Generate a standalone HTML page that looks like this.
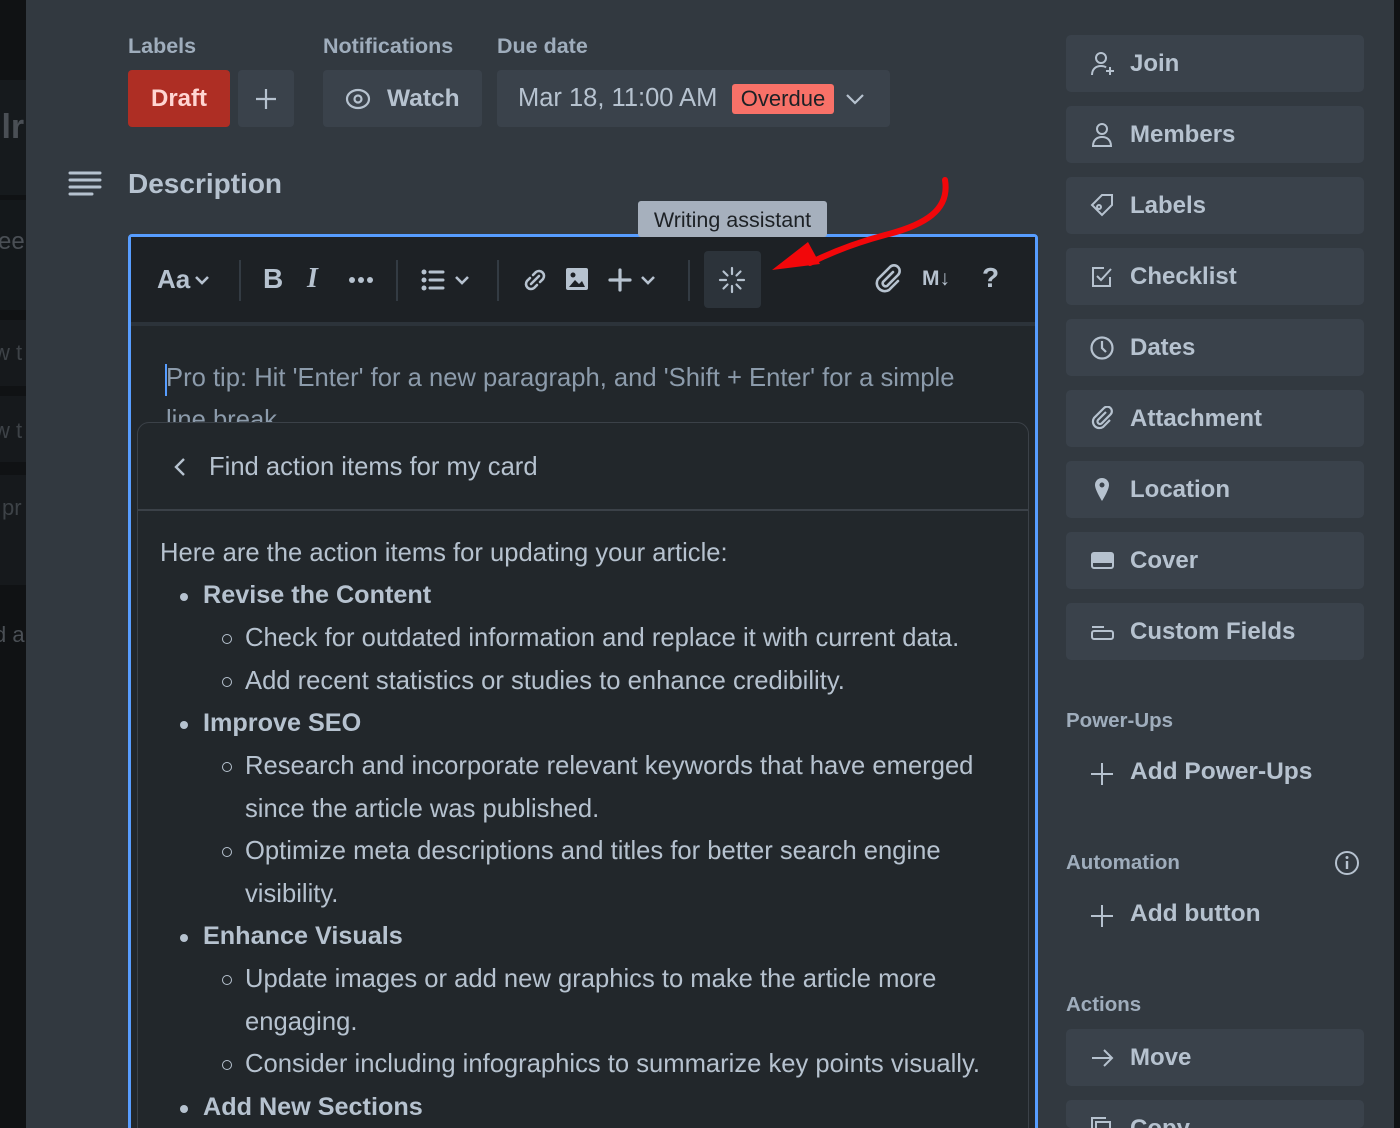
<!DOCTYPE html>
<html style="width:1400px;height:1128px;overflow:hidden"><head><meta charset="utf-8"><style>
*{box-sizing:border-box;margin:0;padding:0}
body{width:1400px;height:1128px;overflow:hidden;background:#323940;font-family:"Liberation Sans",sans-serif;color:#b6c2cf;position:relative}
.abs{position:absolute}
.lbl{font-size:21.5px;font-weight:bold;color:#9fadbc}
.btn{position:absolute;background:#3a424b;border-radius:4px}
.sb{position:absolute;left:1066px;width:298px;height:57px;background:#3a424b;border-radius:5px;font-size:24px;font-weight:bold;color:#b6c2cf;line-height:57px;padding-left:64px}
.sb svg{position:absolute;left:24px;top:16px}
.sh{position:absolute;left:1066px;font-size:20.5px;font-weight:bold;color:#9fadbc}
.ln{position:absolute;font-size:25.6px;color:#b6c2cf;white-space:nowrap}
.b{font-weight:bold;font-size:25.2px}
.dot{position:absolute;width:8px;height:8px;border-radius:50%;background:#b6c2cf}
.cir{position:absolute;width:10px;height:10px;border-radius:50%;border:1.6px solid #b6c2cf}
</style></head><body>
<div class="abs" style="left:0;top:0;width:26px;height:1128px;background:#101214"></div>
<div class="abs" style="left:0;top:80px;width:26px;height:115px;background:#161a1d"></div>
<div class="abs" style="left:0;top:200px;width:26px;height:110px;background:#14181b"></div>
<div class="abs" style="left:0;top:320px;width:26px;height:66px;background:#16191c"></div>
<div class="abs" style="left:0;top:396px;width:26px;height:66px;background:#16191c"></div>
<div class="abs" style="left:0;top:475px;width:26px;height:110px;background:#16191c"></div>
<div class="abs" style="left:0;top:0;width:26px;height:1128px;overflow:hidden">
<div class="abs" style="left:-8px;top:108px;font-size:34px;font-weight:bold;color:#4a4f55">Ilr</div>
<div class="abs" style="left:-10px;top:228px;font-size:24px;color:#4a4f55">ree</div>
<div class="abs" style="left:-6px;top:340px;font-size:22px;color:#3d4247">w t</div>
<div class="abs" style="left:-6px;top:418px;font-size:22px;color:#3d4247">w t</div>
<div class="abs" style="left:2px;top:495px;font-size:22px;color:#3d4247">pr</div>
<div class="abs" style="left:-6px;top:622px;font-size:22px;color:#4a4f55">d a</div>
</div>
<div class="abs" style="left:1394px;top:0;width:6px;height:1128px;background:#101214"></div>

<div class="abs lbl" style="left:128px;top:34px">Labels</div>
<div class="abs lbl" style="left:323px;top:34px">Notifications</div>
<div class="abs lbl" style="left:497px;top:34px">Due date</div>

<div class="btn" style="left:128px;top:70px;width:102px;height:57px;background:#ae2e24;color:#ffd5d2;font-size:24px;font-weight:bold;line-height:57px;text-align:center">Draft</div>
<div class="btn" style="left:238px;top:70px;width:56px;height:57px"><svg width="56" height="57"><path d="M28 19v20M18 29h20" stroke="#b6c2cf" stroke-width="2.2"/></svg></div>
<div class="btn" style="left:323px;top:70px;width:159px;height:57px;font-size:24.5px;font-weight:bold;line-height:57px;padding-left:64px">Watch<svg class="abs" style="left:22px;top:17px" width="26" height="24"><ellipse cx="13" cy="12" rx="11" ry="9" fill="none" stroke="#b6c2cf" stroke-width="2.2"/><circle cx="13" cy="12" r="3.5" fill="none" stroke="#b6c2cf" stroke-width="2.2"/></svg></div>
<div class="btn" style="left:497px;top:70px;width:393px;height:57px;font-size:25.5px;line-height:57px;padding-left:21px">Mar 18, 11:00 AM
<span class="abs" style="left:235px;top:14px;width:102px;height:30px;background:#f87168;border-radius:3px;color:#1d2125;font-size:22px;line-height:30px;text-align:center">Overdue</span>
<svg class="abs" style="left:348px;top:22px" width="20" height="14"><path d="M2 3l8 8 8-8" fill="none" stroke="#b6c2cf" stroke-width="2.2"/></svg></div>

<svg class="abs" style="left:68px;top:170px" width="34" height="28"><g stroke="#b6c2cf" stroke-width="3" stroke-linecap="round"><path d="M2 3h30M2 10h30M2 17h30M2 24h22"/></g></svg>
<div class="abs" style="left:128px;top:168px;font-size:28px;font-weight:bold;color:#b6c2cf">Description</div>

<div class="abs" style="left:128px;top:234px;width:910px;height:900px;border:3px solid #579dff;border-radius:4px;background:#22272b"></div>
<div class="abs" style="left:131px;top:237px;width:904px;height:85px;background:#1d2125"></div>
<div class="abs" style="left:131px;top:322px;width:904px;height:4px;background:#2c333a"></div>
<div class="abs" style="left:638px;top:201px;width:189px;height:36px;background:#a6b0bd;border-radius:3px;color:#1d2125;font-size:21.5px;line-height:38px;text-align:center">Writing assistant</div>
<div class="abs" style="left:157px;top:264px;font-size:26px;font-weight:bold">Aa</div>
<svg class="abs" style="left:193px;top:274px" width="18" height="12"><path d="M3 3l6 6 6-6" fill="none" stroke="#b6c2cf" stroke-width="2.6"/></svg>
<div class="abs" style="left:239px;top:260px;width:2px;height:41px;background:#333b43"></div>
<div class="abs" style="left:263px;top:263px;font-size:28px;font-weight:bold">B</div>
<div class="abs" style="left:307px;top:263px;font-size:28px;font-weight:bold;font-family:'Liberation Serif',serif;font-style:italic">I</div>
<svg class="abs" style="left:348px;top:275px" width="26" height="10"><g fill="#b6c2cf"><circle cx="4" cy="5" r="3"/><circle cx="13" cy="5" r="3"/><circle cx="22" cy="5" r="3"/></g></svg>
<div class="abs" style="left:396px;top:260px;width:2px;height:41px;background:#333b43"></div>
<svg class="abs" style="left:421px;top:268px" width="26" height="24"><g fill="#b6c2cf"><circle cx="3" cy="4" r="2.5"/><circle cx="3" cy="12" r="2.5"/><circle cx="3" cy="20" r="2.5"/></g><g stroke="#b6c2cf" stroke-width="3" stroke-linecap="round"><path d="M9 4h13M9 12h13M9 20h13"/></g></svg>
<svg class="abs" style="left:453px;top:274px" width="18" height="12"><path d="M3 3l6 6 6-6" fill="none" stroke="#b6c2cf" stroke-width="2.6"/></svg>
<div class="abs" style="left:497px;top:260px;width:2px;height:41px;background:#333b43"></div>
<svg class="abs" style="left:521px;top:266px" width="28" height="28"><g fill="none" stroke="#b6c2cf" stroke-width="2.6" stroke-linecap="round"><path d="M12 9l3-3a5 5 0 0 1 7 7l-3 3M16 19l-3 3a5 5 0 0 1-7-7l3-3M10 18l8-8"/></g></svg>
<svg class="abs" style="left:565px;top:267px" width="24" height="24"><rect x="1" y="1" width="22" height="22" rx="2" fill="#b6c2cf"/><circle cx="8" cy="8" r="2.5" fill="#1d2125"/><path d="M4 20l6-7 4 4 3-3 3 6z" fill="#1d2125"/></svg>
<svg class="abs" style="left:608px;top:268px" width="24" height="24"><path d="M12 2v20M2 12h20" stroke="#b6c2cf" stroke-width="3.2" stroke-linecap="round"/></svg>
<svg class="abs" style="left:639px;top:274px" width="18" height="12"><path d="M3 3l6 6 6-6" fill="none" stroke="#b6c2cf" stroke-width="2.6"/></svg>
<div class="abs" style="left:688px;top:260px;width:2px;height:41px;background:#333b43"></div>
<div class="abs" style="left:704px;top:251px;width:57px;height:57px;background:#2c333a;border-radius:4px"></div>
<svg class="abs" style="left:718px;top:266px" width="28" height="28"><g stroke="#b6c2cf" stroke-width="2.2" stroke-linecap="round"><path d="M14 2v6M14 20v6M2 14h6M20 14h6M5.5 5.5l4 4M18.5 18.5l4 4M22.5 5.5l-4 4M5.5 22.5l4-4"/></g></svg>
<svg class="abs" style="left:873px;top:264px" width="30" height="32"><path d="M20 8l-10 10a3 3 0 0 0 4 4l11-11a5.5 5.5 0 0 0-8-8L5 15a8 8 0 0 0 11 11l9-9" fill="none" stroke="#b6c2cf" stroke-width="2.6" stroke-linecap="round"/></svg>
<div class="abs" style="left:922px;top:267px;font-size:21px;font-weight:bold">M↓</div>
<div class="abs" style="left:982px;top:262px;font-size:28px;font-weight:bold">?</div>

<svg class="abs" style="left:760px;top:170px" width="200" height="110"><path d="M185 10c5 30-20 45-60 55-30 8-55 18-75 28" fill="none" stroke="#f2070a" stroke-width="6" stroke-linecap="round"/><path d="M12 100l36-28 12 22z" fill="#f2070a"/></svg>

<div class="abs" style="left:165px;top:364px;width:2px;height:32px;background:#579dff"></div>
<div class="ln" style="left:166px;top:364px;color:#8c9bab">Pro tip: Hit 'Enter' for a new paragraph, and 'Shift + Enter' for a simple</div>
<div class="ln" style="left:166px;top:406px;color:#8c9bab;height:16px;overflow:hidden">line break</div>

<div class="abs" style="left:137px;top:422px;width:892px;height:720px;background:#22272b;border:1.5px solid #3b4148;border-radius:12px"></div>
<div class="abs" style="left:138px;top:509px;width:890px;height:2px;background:#3b4148"></div>
<svg class="abs" style="left:172px;top:457px" width="16" height="20"><path d="M12 2L4 10l8 8" fill="none" stroke="#b6c2cf" stroke-width="2.4"/></svg>
<div class="ln" style="left:209px;top:453px">Find action items for my card</div>

<div class="ln" style="left:160px;top:539px">Here are the action items for updating your article:</div>
<div class="dot" style="left:180px;top:593px"></div><div class="ln b" style="left:203px;top:581px">Revise the Content</div>
<div class="cir" style="left:222px;top:634px"></div><div class="ln" style="left:245px;top:624px">Check for outdated information and replace it with current data.</div>
<div class="cir" style="left:222px;top:677px"></div><div class="ln" style="left:245px;top:667px">Add recent statistics or studies to enhance credibility.</div>
<div class="dot" style="left:180px;top:721px"></div><div class="ln b" style="left:203px;top:709px">Improve SEO</div>
<div class="cir" style="left:222px;top:762px"></div><div class="ln" style="left:245px;top:752px">Research and incorporate relevant keywords that have emerged</div>
<div class="ln" style="left:245px;top:795px">since the article was published.</div>
<div class="cir" style="left:222px;top:847px"></div><div class="ln" style="left:245px;top:837px">Optimize meta descriptions and titles for better search engine</div>
<div class="ln" style="left:245px;top:880px">visibility.</div>
<div class="dot" style="left:180px;top:934px"></div><div class="ln b" style="left:203px;top:922px">Enhance Visuals</div>
<div class="cir" style="left:222px;top:975px"></div><div class="ln" style="left:245px;top:965px">Update images or add new graphics to make the article more</div>
<div class="ln" style="left:245px;top:1008px">engaging.</div>
<div class="cir" style="left:222px;top:1060px"></div><div class="ln" style="left:245px;top:1050px">Consider including infographics to summarize key points visually.</div>
<div class="dot" style="left:180px;top:1105px"></div><div class="ln b" style="left:203px;top:1093px">Add New Sections</div>

<div class="sb" style="top:35px"><svg width="26" height="26"><g fill="none" stroke="#b6c2cf" stroke-width="2"><circle cx="11" cy="7" r="5"/><path d="M2 24c0-6 4-9 9-9 2 0 4 .5 5 1.5"/><path d="M20 16v8M16 20h8"/></g></svg>Join</div>
<div class="sb" style="top:106px"><svg width="26" height="26"><g fill="none" stroke="#b6c2cf" stroke-width="2"><circle cx="12" cy="7" r="5"/><path d="M3 24c0-6 4-9 9-9s9 3 9 9z"/></g></svg>Members</div>
<div class="sb" style="top:177px"><svg width="26" height="26"><g fill="none" stroke="#b6c2cf" stroke-width="2"><path d="M12 2h10v10L12 22 2 12z"/><circle cx="9" cy="14" r="2"/></g></svg>Labels</div>
<div class="sb" style="top:248px"><svg width="26" height="26"><g fill="none" stroke="#b6c2cf" stroke-width="2"><path d="M20 13v9H3V4h11"/><path d="M7 12l4 4 10-11"/></g></svg>Checklist</div>
<div class="sb" style="top:319px"><svg width="26" height="26"><g fill="none" stroke="#b6c2cf" stroke-width="2.2"><circle cx="12" cy="13" r="10.5"/><path d="M12 6v7l4 4"/></g></svg>Dates</div>
<div class="sb" style="top:390px"><svg width="26" height="26"><path d="M16 6l-8 8a2.5 2.5 0 0 0 3.5 3.5l9-9a4.5 4.5 0 0 0-6.5-6.5L4 12a6.5 6.5 0 0 0 9 9l7-7" fill="none" stroke="#b6c2cf" stroke-width="2.2"/></svg>Attachment</div>
<div class="sb" style="top:461px"><svg width="26" height="26"><path d="M12 1a7 7 0 0 1 7 7c0 5-7 16-7 16S5 13 5 8a7 7 0 0 1 7-7z" fill="#b6c2cf"/><circle cx="12" cy="8" r="2.5" fill="#3a424b"/></svg>Location</div>
<div class="sb" style="top:532px"><svg width="26" height="26"><rect x="2" y="5" width="21" height="15" rx="2" fill="none" stroke="#b6c2cf" stroke-width="2"/><rect x="2" y="5" width="21" height="10" fill="#b6c2cf"/></svg>Cover</div>
<div class="sb" style="top:603px"><svg width="26" height="26"><g fill="none" stroke="#b6c2cf" stroke-width="2"><path d="M2 8h12"/><rect x="2" y="12" width="21" height="8" rx="2"/></g></svg>Custom Fields</div>

<div class="sh" style="top:709px">Power-Ups</div>
<svg class="abs" style="left:1090px;top:762px" width="24" height="24"><path d="M12 1v22M1 12h22" stroke="#b6c2cf" stroke-width="2"/></svg>
<div class="abs" style="left:1130px;top:758px;font-size:24.5px;font-weight:bold">Add Power-Ups</div>
<div class="sh" style="top:851px">Automation</div>
<svg class="abs" style="left:1334px;top:850px" width="26" height="26"><circle cx="13" cy="13" r="11" fill="none" stroke="#b6c2cf" stroke-width="2"/><path d="M13 11v8" stroke="#b6c2cf" stroke-width="2.4"/><circle cx="13" cy="7.5" r="1.5" fill="#b6c2cf"/></svg>
<svg class="abs" style="left:1090px;top:904px" width="24" height="24"><path d="M12 1v22M1 12h22" stroke="#b6c2cf" stroke-width="2"/></svg>
<div class="abs" style="left:1130px;top:900px;font-size:24.5px;font-weight:bold">Add button</div>
<div class="sh" style="top:993px">Actions</div>
<div class="sb" style="top:1029px"><svg width="26" height="26"><path d="M2 13h20M14 5l8 8-8 8" fill="none" stroke="#b6c2cf" stroke-width="2"/></svg>Move</div>
<div class="sb" style="top:1100px;height:28px;overflow:hidden"><svg width="26" height="26"><g fill="none" stroke="#b6c2cf" stroke-width="2"><rect x="6" y="6" width="14" height="16"/><path d="M2 18V2h14"/></g></svg>Copy</div>
</body></html>
